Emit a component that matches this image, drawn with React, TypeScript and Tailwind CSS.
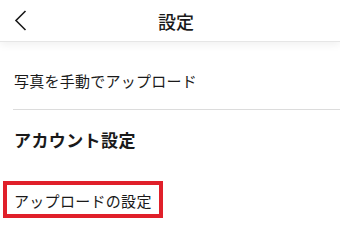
import React from "react";

export default function App() {
  const font = { fontFamily: '"Noto Sans CJK JP", "Noto Sans", sans-serif' };
  return (
    <div className="w-[340px] h-[234px] bg-white text-[#1a1a1a] overflow-hidden" style={font}>
      <div className="relative h-[42px] flex items-center justify-center border-b border-[#e6e6e6] shadow-[0_3px_8px_rgba(0,0,0,0.06)] bg-white">
        <svg className="absolute left-[14px] top-[10px]" width="14" height="21" viewBox="0 0 14 21" fill="none">
          <path d="M11.5 1 L2 10.5 L11.5 20" stroke="#1a1a1a" strokeWidth="1.6" strokeLinejoin="miter" />
        </svg>
        <span className="pl-[12px] text-[18px] leading-[24px] font-medium">設定</span>
      </div>
      <div className="pl-[14px] pt-[28px]">
        <div className="text-[15px] leading-[22px] tracking-[0.25px] pb-[17px] border-b border-[#dcdcdc] -ml-[1px] pl-[1px]">写真を手動でアップロード</div>
        <div className="mt-[18px] text-[17px] leading-[24px] tracking-[0.4px] font-bold">アカウント設定</div>
      </div>
      <div className="mt-[29px] ml-[3px] w-[160px] border-[4px] border-[#e0202a] pl-[7px] pt-[3px] pb-[2px]">
        <span className="text-[15px] leading-[21px] tracking-[0.3px]">アップロードの設定</span>
      </div>
    </div>
  );
}
